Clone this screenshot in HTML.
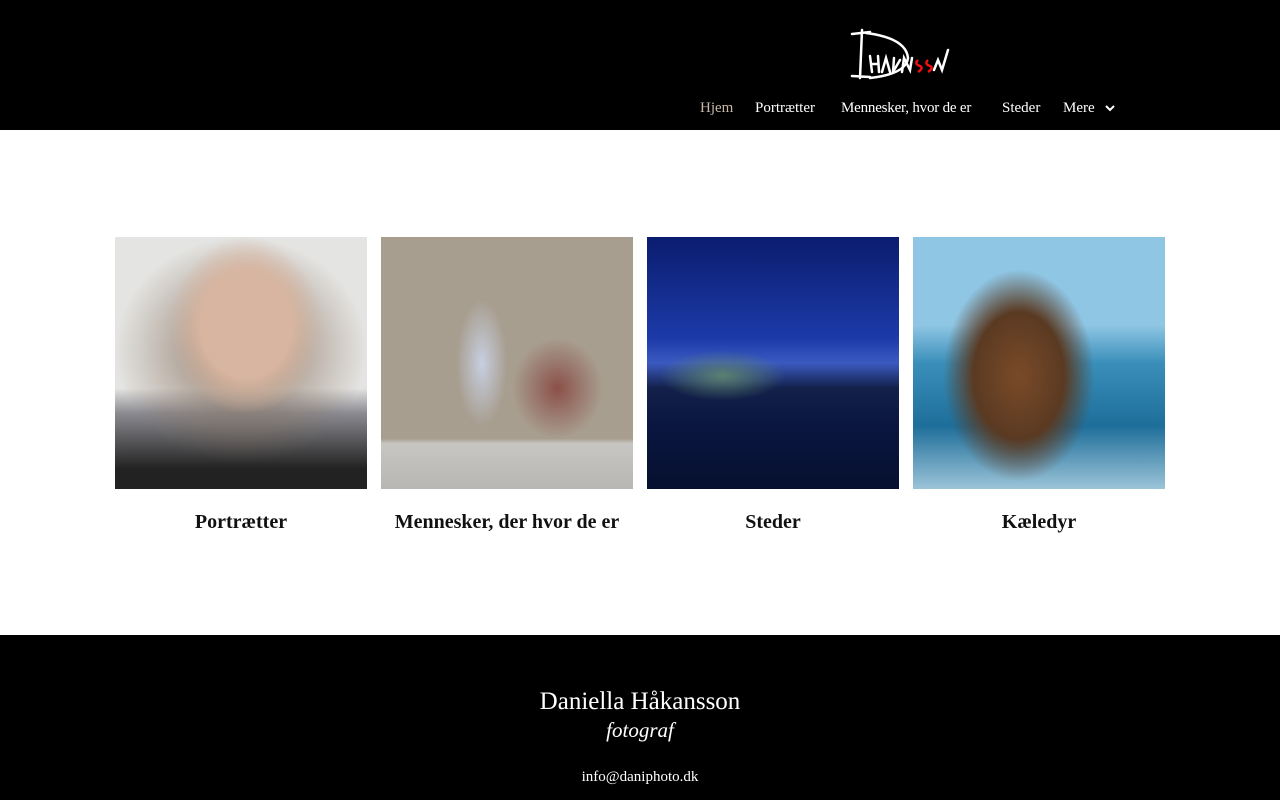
<!DOCTYPE html>
<html><head><meta charset="utf-8"><style>
*{margin:0;padding:0;box-sizing:border-box}
body{width:1280px;height:800px;overflow:hidden;background:#fff;font-family:"Liberation Serif",serif}
header{position:absolute;left:0;top:0;width:1280px;height:130px;background:#000}
.logo{position:absolute;left:848px;top:28px}
nav{position:absolute;top:100px;left:700px;font-size:15px;color:#fff;white-space:nowrap}
nav span{position:absolute}
.card{position:absolute;top:237px;width:252px}
.img{width:252px;height:252px}
.card h2{text-align:center;font-size:20px;font-weight:bold;margin-top:22px;color:#111}
footer{position:absolute;top:635px;left:0;width:1280px;height:165px;background:#000;color:#fff;text-align:center}
</style></head><body>
<header>
<svg class="logo" width="110" height="54" viewBox="0 0 110 54">
<g stroke="#fff" stroke-width="2.5" fill="none" stroke-linecap="round">
<path d="M4 6 L22 4 M14 2 L12 50 M4 48 L22 49"/>
<path d="M18 5 Q58 10 60 30 Q58 46 22 50"/>
<path d="M22 28 L24 44 M24 36 L30 36 M30 28 L31 44 M34 44 L38 30 L42 44 M46 30 L45 44 L52 32 M54 44 L56 30 L62 42 L64 30"/>
<path d="M86 42 L90 32 L94 42 L100 22"/>
</g>
<path d="M70 32 Q66 36 72 38 Q76 40 70 44 M80 32 Q76 36 82 38 Q86 40 80 44" stroke="#e11" stroke-width="2.5" fill="none"/>
</svg>
<nav>
<span style="left:0;color:#c8b9a6">Hjem</span>
<span style="left:55px">Portrætter</span>
<span style="left:141px;letter-spacing:-0.2px">Mennesker, hvor de er</span>
<span style="left:302px">Steder</span>
<span style="left:363px">Mere</span>
<svg style="position:absolute;left:405px;top:4px" width="10" height="8" viewBox="0 0 10 8"><path d="M1 2 L5 6 L9 2" stroke="#fff" stroke-width="2" fill="none"/></svg>
</nav>
</header>
<div class="card" style="left:115px"><div class="img" style="background:radial-gradient(ellipse 30% 35% at 52% 35%,#d8b5a0 0 60%,transparent 100%),radial-gradient(ellipse 50% 45% at 50% 45%,#8a7360,transparent 100%),linear-gradient(#e4e4e2 0 60%,#8a8a90 70%,#222 92%)"></div><h2>Portrætter</h2></div>
<div class="card" style="left:381px"><div class="img" style="background:radial-gradient(ellipse 18% 20% at 70% 60%,#8b5048,transparent 100%),radial-gradient(ellipse 10% 25% at 40% 50%,#c7cfe0,transparent 100%),linear-gradient(#a89e90 0 80%,#c8c6c2 82%,#b8b6b2)"></div><h2>Mennesker, der hvor de er</h2></div>
<div class="card" style="left:647px"><div class="img" style="background:radial-gradient(ellipse 25% 10% at 30% 55%,#5a8070,transparent 100%),linear-gradient(#0a1c6e 0%,#1c3aa8 40%,#3b5ac0 50%,#12204a 60%,#0a1640 75%,#061030)"></div><h2>Steder</h2></div>
<div class="card" style="left:913px"><div class="img" style="background:radial-gradient(ellipse 30% 42% at 42% 55%,#7a4a28,#5a3a22 60%,transparent 100%),linear-gradient(#8fc6e4 0 35%,#3a8fba 50%,#1e6e9a 75%,#9cc4d8)"></div><h2>Kæledyr</h2></div>
<footer>
<div style="position:absolute;top:53px;width:100%;font-size:25px">Daniella Håkansson</div>
<div style="position:absolute;top:83px;width:100%;font-size:21px;font-style:italic">fotograf</div>
<div style="position:absolute;top:134px;width:100%;font-size:15px">info@daniphoto.dk</div>
</footer>
</body></html>
